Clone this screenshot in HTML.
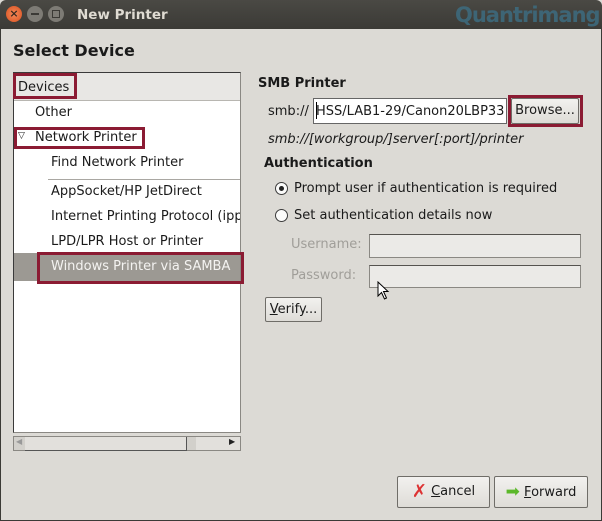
<!DOCTYPE html>
<html><head><style>
body{margin:0;width:602px;height:521px;overflow:hidden;background:#dcdad5;font-family:"DejaVu Sans","Liberation Sans",sans-serif;font-size:13px;color:#1a1a1a;position:relative}
.a{position:absolute;white-space:nowrap}
.red{position:absolute;border:3px solid #8b1b33;box-sizing:border-box}
.btn{position:absolute;box-sizing:border-box;border:1px solid #6f6d68;background:linear-gradient(#f2f1ef,#dedcd7);border-radius:2px;text-align:center}
.ent{position:absolute;box-sizing:border-box;border:1px solid #8a8883;border-top-color:#55534f;background:#ebeae7}
.rad{position:absolute;width:11px;height:11px;border:1px solid #3c3c3c;border-radius:50%;background:#fbfbfa}
</style></head><body>
<div class="a" style="left:0;top:0;width:602px;height:29px;background:linear-gradient(#4a4944,#3b3a36);border-radius:6px 6px 0 0"></div>
<div class="a" style="left:6px;top:6px;width:16px;height:16px;border-radius:50%;background:radial-gradient(#f58a5a,#d9501f);color:#3b2a20;font-size:11px;line-height:16px;text-align:center;font-weight:bold">×</div>
<div class="a" style="left:27px;top:6px;width:16px;height:16px;border-radius:50%;background:#7d7b75"></div>
<div class="a" style="left:31px;top:13px;width:8px;height:2px;background:#3b3a36"></div>
<div class="a" style="left:48px;top:6px;width:16px;height:16px;border-radius:50%;background:#7d7b75"></div>
<div class="a" style="left:52px;top:10px;width:6px;height:6px;border:1px solid #3b3a36"></div>
<div class="a" style="left:77px;top:7px;color:#dfdbd2;font-weight:bold;font-size:13.5px">New Printer</div>
<div class="a" style="left:455px;top:3px;color:#3d6c80;font-weight:bold;font-size:21px;letter-spacing:-1px;opacity:.85;width:147px;overflow:hidden">Quantrimang</div>
<div class="a" style="left:0;top:29px;width:1px;height:492px;background:#3b3a36"></div>
<div class="a" style="left:601px;top:29px;width:1px;height:492px;background:#3b3a36"></div>
<div class="a" style="left:0;top:520px;width:602px;height:1px;background:#3b3a36"></div>

<div class="a" style="left:13px;top:41px;font-weight:bold;font-size:16px">Select Device</div>

<div class="a" style="left:13px;top:72px;width:228px;height:361px;border:1px solid #8a8883;border-top-color:#3a3a3a;border-left-color:#3a3a3a;background:#fff;box-sizing:border-box"></div>
<div class="a" style="left:14px;top:73px;width:226px;height:27px;background:#e8e7e4;border-bottom:1px solid #b8b6b1"></div>
<div class="a" style="left:18px;top:80px">Devices</div>
<div class="red" style="left:13px;top:73px;width:64px;height:26px"></div>
<div class="a" style="left:35px;top:105px">Other</div>
<div class="a" style="left:18px;top:131px;font-size:9px">▽</div>
<div class="a" style="left:35px;top:130px">Network Printer</div>
<div class="red" style="left:14px;top:127px;width:131px;height:22px"></div>
<div class="a" style="left:51px;top:155px">Find Network Printer</div>
<div class="a" style="left:48px;top:179px;width:192px;height:1px;background:#a9a7a2"></div>
<div class="a" style="left:51px;top:184px">AppSocket/HP JetDirect</div>
<div class="a" style="left:51px;top:209px;width:189px;overflow:hidden">Internet Printing Protocol (ipp)</div>
<div class="a" style="left:51px;top:234px">LPD/LPR Host or Printer</div>
<div class="a" style="left:14px;top:253px;width:226px;height:28px;background:#9c9993"></div>
<div class="a" style="left:51px;top:259px;color:#f4f3f1">Windows Printer via SAMBA</div>
<div class="red" style="left:37px;top:252px;width:207px;height:32px"></div>

<div class="a" style="left:13px;top:436px;width:228px;height:15px;border:1px solid #8a8883;box-sizing:border-box;background:#d2d0cb"></div>
<div class="a" style="left:25px;top:437px;width:161px;height:13px;background:#e2e0dc;border-right:1px solid #555;border-bottom:1px solid #555"></div>
<div class="a" style="left:16px;top:437px;font-size:8px;color:#999">◀</div>
<div class="a" style="left:196px;top:437px;width:44px;height:13px;background:#e2e0dc"></div>
<div class="a" style="left:229px;top:437px;font-size:8px;color:#222">▶</div>

<div class="a" style="left:258px;top:76px;font-weight:bold">SMB Printer</div>
<div class="a" style="left:268px;top:104px">smb://</div>
<div class="a" style="left:313px;top:98px;width:194px;height:26px;border:1px solid #666;background:#fff;box-sizing:border-box"></div>
<div class="a" style="left:316px;top:104px;width:189px;overflow:hidden">HSS/LAB1-29/Canon20LBP33</div>
<div class="a" style="left:316px;top:102px;width:1px;height:17px;background:#000"></div>
<div class="btn" style="left:511px;top:98px;width:68px;height:26px;line-height:24px">Browse...</div>
<div class="red" style="left:508px;top:95px;width:75px;height:32px"></div>
<div class="a" style="left:268px;top:132px;font-style:italic">smb://[workgroup/]server[:port]/printer</div>
<div class="a" style="left:264px;top:156px;font-weight:bold">Authentication</div>
<div class="rad" style="left:275px;top:182px"></div>
<div class="a" style="left:279px;top:186px;width:5px;height:5px;border-radius:50%;background:#222"></div>
<div class="a" style="left:294px;top:181px">Prompt user if authentication is required</div>
<div class="rad" style="left:275px;top:209px"></div>
<div class="a" style="left:294px;top:208px">Set authentication details now</div>
<div class="a" style="left:291px;top:237px;color:#a09e99">Username:</div>
<div class="ent" style="left:369px;top:234px;width:212px;height:24px"></div>
<div class="a" style="left:291px;top:268px;color:#a09e99">Password:</div>
<div class="ent" style="left:369px;top:265px;width:212px;height:23px"></div>
<svg class="a" style="left:377px;top:281px" width="14" height="20"><path d="M1 1 L1 15 L4.5 11.5 L7.5 18 L9.5 17 L6.5 10.5 L11 10.5 Z" fill="#fff" stroke="#000" stroke-width="1"/></svg>
<div class="btn" style="left:265px;top:297px;width:57px;height:25px;line-height:23px"><u>V</u>erify...</div>

<div class="btn" style="left:397px;top:476px;width:93px;height:32px;line-height:30px"><span style="color:#d33;font-weight:bold;font-size:18px;vertical-align:-2px">✗</span> <u>C</u>ancel</div>
<div class="btn" style="left:494px;top:476px;width:94px;height:32px;line-height:30px"><span style="color:#5cb82a;font-size:17px;vertical-align:-1px">➡</span> <u>F</u>orward</div>
</body></html>
